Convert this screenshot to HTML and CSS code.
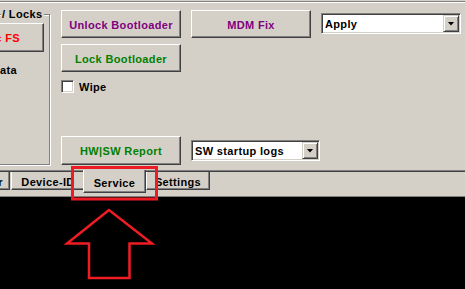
FILE: index.html
```html
<!DOCTYPE html>
<html lang="en">
<head>
  <meta charset="UTF-8">
  <meta name="viewport" content="width=device-width, initial-scale=1.0">
  <title>Service</title>
<link rel="stylesheet" href="styles.css">
</head>
<body>
  <div class="window">
    <div class="page">
      <fieldset class="locks">
        <legend>/ Locks</legend>
        <button class="btn btn-fs">c FS</button>
        <div class="locks-label">ata</div>
      </fieldset>

      <div class="col col-left">
        <button class="btn purple">Unlock Bootloader</button>
        <button class="btn green btn-lock">Lock Bootloader</button>
        <label class="check"><span class="box"></span>Wipe</label>
        <button class="btn green btn-report">HW|SW Report</button>
      </div>

      <div class="col col-mid">
        <button class="btn purple">MDM Fix</button>
        <div class="combo combo-logs">
          <span class="combo-text">SW startup logs</span>
          <span class="drop"></span>
        </div>
      </div>

      <div class="col col-right">
        <div class="combo">
          <span class="combo-text">Apply</span>
          <span class="drop"></span>
        </div>
      </div>
    </div>

    <div class="tabs">
      <div class="tab tab-first">r</div>
      <div class="tab tab-device">Device-ID</div>
      <div class="tab tab-active">Service</div>
      <div class="tab tab-settings">Settings</div>
    </div>

    <div class="console"></div>
  </div>

  <!-- annotation drawn over the screenshot -->
  <svg class="marks" width="465" height="289" viewBox="0 0 465 289">
    <rect x="72.5" y="167.5" width="84" height="31.5" fill="none" stroke="#ed1c24" stroke-width="3"/>
    <polygon points="109,210 67,243.5 89,243.5 89,278 129.5,278 129.5,243.5 152,243.5" fill="none" stroke="#f01c24" stroke-width="2.5"/>
  </svg>
</body>
</html>
```

FILE: styles.css
```css
body {
  margin: 0;
  width: 465px;
  height: 289px;
  overflow: hidden;
  position: relative;
  background-color: #d4d0c8;
  font: bold 11px "Liberation Sans", Arial, sans-serif;
  letter-spacing: 0.35px;
  color: #000;
}

.window {
  display: flex;
  flex-direction: column;
  height: 289px;
}

.page {
  display: flex;
  flex-shrink: 0;
  height: 171px;
  box-sizing: border-box;
  margin-top: 1px;
  border-top: 1px solid #808080;
  border-bottom: 1px solid #404040;
  box-shadow: inset 0 1px 0 #fff, inset 0 -1px 0 #808080;
}

/* group box, cut by the left edge */
.locks {
  margin: 6px 0 0 -20px;
  padding: 0;
  width: 70px;
  height: 157px;
  min-width: 0;
  box-sizing: border-box;
  border: 1px solid #808080;
  box-shadow: 1px 1px 0 #fff, inset 1px 1px 0 #fff;
}

.locks legend {
  margin-left: 20px;
  padding: 0 2px 0 1px;
  line-height: 13px;
  background-color: #d4d0c8;
}

.locks-label {
  margin-top: 12px;
  padding-left: 19px;
  line-height: 13px;
}

.btn {
  display: block;
  box-sizing: border-box;
  padding: 1px 0 0;
  background-color: #d4d0c8;
  border: 1px solid;
  border-color: #fff #404040 #404040 #fff;
  box-shadow: inset -1px -1px 0 #808080;
  font: inherit;
  letter-spacing: inherit;
  color: #000;
  text-align: center;
}

.btn-fs {
  width: 63px;
  height: 29px;
  margin-top: 2px;
  padding-right: 23px;
  text-align: right;
  color: #f00;
}

.purple {
  color: #800080;
}

.green {
  color: #008000;
}

.col {
  display: flex;
  flex-direction: column;
  box-sizing: border-box;
}

.col-left {
  width: 120px;
  margin-left: 11px;
  padding: 8px 0 6px;
}

.col-left .btn {
  width: 120px;
  height: 28px;
}

.col-left .btn-lock {
  margin-top: 6px;
}

.col-left .btn-report {
  margin-top: auto;
  height: 29px;
}

.check {
  display: flex;
  align-items: center;
  gap: 5px;
  height: 13px;
  margin-top: 8px;
}

.box {
  width: 13px;
  height: 13px;
  box-sizing: border-box;
  background-color: #fff;
  border: 1px solid;
  border-color: #808080 #fff #fff #808080;
  box-shadow: inset 1px 1px 0 #404040, inset -1px -1px 0 #d4d0c8;
}

.col-mid {
  width: 130px;
  margin-left: 10px;
  padding: 8px 0 10px;
}

.col-mid .btn {
  width: 120px;
  height: 28px;
}

.combo-logs {
  margin-top: auto;
  width: 129px;
}

.col-right {
  width: 140px;
  padding-top: 11px;
}

.combo {
  display: flex;
  align-items: center;
  height: 21px;
  box-sizing: border-box;
  padding: 1px 1px 1px 3px;
  background-color: #fff;
  border: 1px solid;
  border-color: #808080 #fff #fff #808080;
  box-shadow: inset 1px 1px 0 #404040, inset -1px -1px 0 #d4d0c8;
}

.combo-text {
  flex: 1;
  white-space: nowrap;
}

.drop {
  display: flex;
  align-items: center;
  justify-content: center;
  width: 16px;
  height: 17px;
  box-sizing: border-box;
  background-color: #d4d0c8;
  border: 1px solid;
  border-color: #d4d0c8 #404040 #404040 #d4d0c8;
  box-shadow: inset 1px 1px 0 #fff, inset -1px -1px 0 #808080;
}

.drop::after {
  content: "";
  width: 7px;
  height: 4px;
  background-color: #000;
  clip-path: polygon(0 0, 100% 0, 50% 100%);
}

.tabs {
  display: flex;
  align-items: flex-start;
  flex-shrink: 0;
  height: 25px;
  box-sizing: border-box;
  border-bottom: 1px solid #808080;
}

.tab {
  box-sizing: border-box;
  height: 18px;
  padding: 3px 0 0;
  line-height: 14px;
  text-align: center;
  white-space: nowrap;
  border: 1px solid;
  border-top: 0;
  border-color: transparent #404040 #404040 #fff;
  box-shadow: inset -1px -1px 0 #808080;
  background-color: #d4d0c8;
}

.tab-first {
  width: 30px;
  margin-left: -20px;
  padding-right: 6px;
  text-align: right;
}

.tab-device {
  width: 74px;
  margin-left: 1px;
}

.tab-active {
  position: relative;
  z-index: 1;
  width: 63px;
  height: 23px;
  margin: -2px 0 0 -2px;
  padding-top: 6px;
}

.tab-settings {
  width: 64px;
}

.console {
  flex: 1;
  background-color: #000;
}

.marks {
  position: absolute;
  left: 0;
  top: 0;
  pointer-events: none;
}
```
